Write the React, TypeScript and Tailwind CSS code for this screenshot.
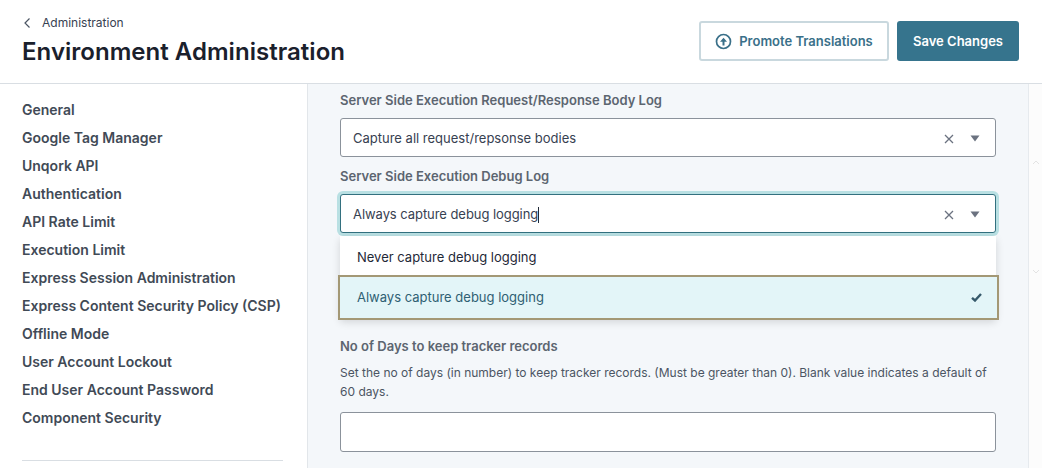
import React from "react";

const nav = [
  "General",
  "Google Tag Manager",
  "Unqork API",
  "Authentication",
  "API Rate Limit",
  "Execution Limit",
  "Express Session Administration",
  "Express Content Security Policy (CSP)",
  "Offline Mode",
  "User Account Lockout",
  "End User Account Password",
  "Component Security",
];

function SelectIcons() {
  return (
    <div className="flex items-center gap-[16px] mr-[15px]">
      <svg width="10" height="10" viewBox="0 0 10 10" fill="none" stroke="#6b7280" strokeWidth="1.3">
        <path d="M1 1l8 8M9 1l-8 8" />
      </svg>
      <svg width="10" height="7" viewBox="0 0 10 7" fill="#6b7280">
        <path d="M0.5 0.5h9L5 6.5z" />
      </svg>
    </div>
  );
}

export default function App() {
  return (
    <div className="w-[1042px] h-[468px] overflow-hidden bg-white flex flex-col font-['Inter',sans-serif] text-[#111827]">
      <header className="h-[84px] shrink-0 border-b border-[#d9dee3] flex justify-between pl-[22px] pr-[23px]">
        <div>
          <div className="flex items-center h-[14px] mt-[16px] text-[12px] text-[#374151]">
            <svg width="8" height="12" viewBox="0 0 8 12" fill="none" stroke="#4b5563" strokeWidth="1.2" className="ml-[1px] mr-[11px]">
              <path d="M6.5 1.5L2 6l4.5 4.5" />
            </svg>
            Administration
          </div>
          <h1 className="mt-[6px] text-[24px] leading-[32px] font-semibold tracking-[0.03px] text-[#1a202c]">Environment Administration</h1>
        </div>
        <div className="flex gap-[8px] pt-[21px] items-start">
          <button className="h-[40px] w-[190px] pt-[1px] rounded-[3px] border-2 border-[#c9d8de] bg-white flex items-center justify-center gap-[7px] text-[13px] font-semibold text-[#3a7089]">
            <svg width="17" height="17" viewBox="0 0 17 17" fill="none" stroke="#3a7089" strokeWidth="1.7">
              <circle cx="8.5" cy="8.5" r="7" />
              <path d="M8.5 12.5V6.5" strokeWidth="2" />
              <path d="M5 8.8L8.5 4.8l3.5 4z" fill="#3a7089" stroke="none" />
            </svg>
            Promote Translations
          </button>
          <button className="h-[40px] w-[122px] pt-[1px] rounded-[3px] bg-[#36748d] text-white text-[13px] font-semibold">Save Changes</button>
        </div>
      </header>
      <div className="flex flex-1 min-h-0">
        <aside className="w-[308px] shrink-0 border-r border-[#e2e6ea] pl-[22px] pr-[24px] pt-[12px]">
          <ul>
            {nav.map((n) => (
              <li key={n} className="h-[28px] leading-[28px] text-[14px] font-semibold text-[#414a56] whitespace-nowrap">
                {n}
              </li>
            ))}
          </ul>
          <div className="mt-[28px] border-t border-[#d9dee3]" />
        </aside>
        <main className="w-[721px] shrink-0 border-r border-[#e6eaee] bg-[#f4f7fa] px-[32px] pt-[8px] text-[13px]">
          <div className="h-[17px] leading-[17px] font-semibold text-[#5c6570]">Server Side Execution Request/Response Body Log</div>
          <div className="mt-[9px] h-[39px] pt-[2px] rounded-[3px] border border-[#8b929b] bg-white flex items-center justify-between pl-[12px] text-[#374151]">
            Capture all request/repsonse bodies
            <SelectIcons />
          </div>
          <div className="mt-[11px] h-[17px] leading-[17px] font-semibold text-[#5c6570]">Server Side Execution Debug Log</div>
          <div className="relative mt-[9px]">
            <div className="h-[39px] pt-[2px] rounded-[3px] border border-[#33707f] ring-[3px] ring-[#b9e0e3] bg-white flex items-center justify-between pl-[12px] text-[#374151]">
              <span className="flex items-center tracking-[-0.06px]">
                Always capture debug logging
                <span className="w-px h-[16px] bg-[#1f2937]" />
              </span>
              <SelectIcons />
            </div>
            <div className="absolute left-0 right-0 top-[42px] h-[83px] bg-white shadow-[0_3px_8px_rgba(0,0,0,0.14)] z-10">
              <div className="h-[43px] flex items-center pl-[17px] text-[#1f2937]">Never capture debug logging</div>
              <div className="absolute left-[-2px] right-[-3px] top-[39px] h-[45px] border-2 border-[#a39875] bg-[#e3f5f8] flex items-center justify-between pl-[17px] pr-[15px] text-[#2f6073]">
                Always capture debug logging
                <svg width="11" height="9" viewBox="0 0 11 9" fill="none" stroke="#36596b" strokeWidth="2.4">
                  <path d="M1 4.8L4 7.5 10 1" />
                </svg>
              </div>
            </div>
          </div>
          <div className="mt-[105px] h-[17px] leading-[17px] font-semibold text-[#5c6570]">No of Days to keep tracker records</div>
          <p className="mt-[8px] text-[12px] leading-[19px] text-[#4b5563]">
            Set the no of days (in number) to keep tracker records. (Must be greater than 0). Blank value indicates a default of 60 days.
          </p>
          <div className="mt-[11px] h-[40px] rounded-[3px] border border-[#8b929b] bg-white" />
        </main>
        <div className="flex-1 bg-[#fcfcfc] flex flex-col items-center pt-[76px]">
          <svg width="8" height="5" viewBox="0 0 8 5" fill="none" stroke="#e3e3e3" strokeWidth="1">
            <path d="M1 4l3-3 3 3" />
          </svg>
          <svg width="8" height="5" viewBox="0 0 8 5" fill="none" stroke="#e3e3e3" strokeWidth="1" className="mt-[104px]">
            <path d="M1 1l3 3 3-3" />
          </svg>
        </div>
      </div>
    </div>
  );
}
